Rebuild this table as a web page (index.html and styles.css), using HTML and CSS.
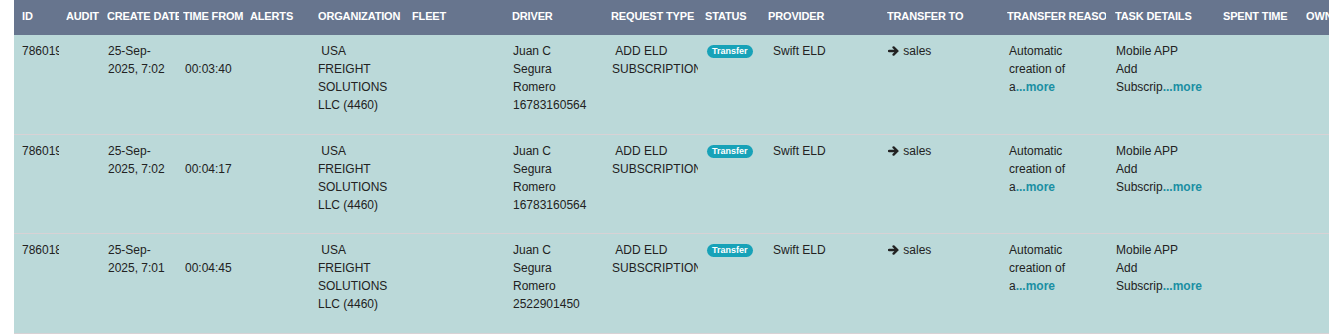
FILE: index.html
```html
<!DOCTYPE html>
<html lang="en">
<head>
<meta charset="utf-8">
<title>Tasks</title>
<link rel="stylesheet" href="styles.css">
</head>
<body>
<div class="grid-table">
  <div class="row head">
    <div class="cell">ID</div>
    <div class="cell">Audit</div>
    <div class="cell h-date">Create Date</div>
    <div class="cell">Time From</div>
    <div class="cell">Alerts</div>
    <div class="cell">Organization</div>
    <div class="cell">Fleet</div>
    <div class="cell">Driver</div>
    <div class="cell">Request Type</div>
    <div class="cell">Status</div>
    <div class="cell">Provider</div>
    <div class="cell">Transfer To</div>
    <div class="cell h-reason">Transfer Reason</div>
    <div class="cell">Task Details</div>
    <div class="cell">Spent Time</div>
    <div class="cell">Owner</div>
  </div>

  <div class="row item">
    <div class="cell c-id">7860195</div>
    <div class="cell"></div>
    <div class="cell c-date">25-Sep-2025, 7:02</div>
    <div class="cell c-time">00:03:40</div>
    <div class="cell"></div>
    <div class="cell c-org">&nbsp;USA FREIGHT SOLUTIONS LLC (4460)</div>
    <div class="cell"></div>
    <div class="cell c-driver">Juan C Segura Romero 16783160564</div>
    <div class="cell c-req">&nbsp;ADD ELD SUBSCRIPTION</div>
    <div class="cell c-status"><span class="badge">Transfer</span></div>
    <div class="cell c-provider">Swift ELD</div>
    <div class="cell c-to"><svg class="arrow" viewBox="0 0 12 10"><path d="M1 5h8.2M5.6 1.4L9.4 5 5.6 8.6"/></svg> sales</div>
    <div class="cell c-reason">Automatic creation of a<a class="more" href="#">...more</a></div>
    <div class="cell c-task">Mobile APP Add Subscrip<a class="more" href="#">...more</a></div>
    <div class="cell"></div>
    <div class="cell"></div>
  </div>

  <div class="row item">
    <div class="cell c-id">7860194</div>
    <div class="cell"></div>
    <div class="cell c-date">25-Sep-2025, 7:02</div>
    <div class="cell c-time">00:04:17</div>
    <div class="cell"></div>
    <div class="cell c-org">&nbsp;USA FREIGHT SOLUTIONS LLC (4460)</div>
    <div class="cell"></div>
    <div class="cell c-driver">Juan C Segura Romero 16783160564</div>
    <div class="cell c-req">&nbsp;ADD ELD SUBSCRIPTION</div>
    <div class="cell c-status"><span class="badge">Transfer</span></div>
    <div class="cell c-provider">Swift ELD</div>
    <div class="cell c-to"><svg class="arrow" viewBox="0 0 12 10"><path d="M1 5h8.2M5.6 1.4L9.4 5 5.6 8.6"/></svg> sales</div>
    <div class="cell c-reason">Automatic creation of a<a class="more" href="#">...more</a></div>
    <div class="cell c-task">Mobile APP Add Subscrip<a class="more" href="#">...more</a></div>
    <div class="cell"></div>
    <div class="cell"></div>
  </div>

  <div class="row item">
    <div class="cell c-id">7860188</div>
    <div class="cell"></div>
    <div class="cell c-date">25-Sep-2025, 7:01</div>
    <div class="cell c-time">00:04:45</div>
    <div class="cell"></div>
    <div class="cell c-org">&nbsp;USA FREIGHT SOLUTIONS LLC (4460)</div>
    <div class="cell"></div>
    <div class="cell c-driver">Juan C Segura Romero 2522901450</div>
    <div class="cell c-req">&nbsp;ADD ELD SUBSCRIPTION</div>
    <div class="cell c-status"><span class="badge">Transfer</span></div>
    <div class="cell c-provider">Swift ELD</div>
    <div class="cell c-to"><svg class="arrow" viewBox="0 0 12 10"><path d="M1 5h8.2M5.6 1.4L9.4 5 5.6 8.6"/></svg> sales</div>
    <div class="cell c-reason">Automatic creation of a<a class="more" href="#">...more</a></div>
    <div class="cell c-task">Mobile APP Add Subscrip<a class="more" href="#">...more</a></div>
    <div class="cell"></div>
    <div class="cell"></div>
  </div>
</div>
</body>
</html>
```

FILE: styles.css
```css
html, body {
  margin: 0;
  padding: 0;
  background: #ffffff;
  overflow: hidden;
}

body {
  font-family: "Liberation Sans", Arial, sans-serif;
  font-size: 12px;
  color: #222222;
}

.grid-table {
  margin-left: 14px;
  width: max-content;
  background: #bbd9d9;
}

.row {
  display: grid;
  grid-template-columns: 44px 41px 76px 67px 68px 94px 100px 99px 94px 63px 119px 120px 108px 108px 83px 100px;
  padding-left: 8px;
}

.cell {
  overflow: hidden;
  min-width: 0;
}

.head {
  height: 35px;
  background: #67758e;
  color: #ffffff;
  font-size: 11px;
  font-weight: bold;
  text-transform: uppercase;
  line-height: 14px;
  box-sizing: border-box;
  padding-top: 9px;
  letter-spacing: -0.15px;
}

.head .cell {
  white-space: nowrap;
}

.h-date {
  width: 72px;
}

.h-reason {
  width: 99px;
}

.item {
  height: 99.5px;
  box-sizing: border-box;
  border-bottom: 1px solid #d8d2d5;
  line-height: 18px;
  padding-top: 7px;
}

.c-id {
  width: 37px;
  white-space: nowrap;
}

.c-date {
  width: 62px;
  padding-left: 1px;
}

.c-time {
  padding-left: 2px;
  margin-top: 18px;
}

.c-org {
  width: 74px;
}

.c-driver {
  width: 76px;
  padding-left: 1px;
}

.c-req {
  width: 86px;
  padding-left: 1px;
}

.c-status {
  padding-left: 2px;
}

.badge {
  display: inline-block;
  background: #17a2b8;
  color: #ffffff;
  font-size: 9px;
  font-weight: bold;
  line-height: 1;
  padding: 2px 5px;
  border-radius: 10px;
  vertical-align: 1px;
}

.c-provider {
  padding-left: 5px;
}

.c-to {
  padding-left: 1px;
}

.arrow {
  width: 12px;
  height: 10px;
  fill: none;
  stroke: #222222;
  stroke-width: 2.4;
  stroke-linecap: round;
  stroke-linejoin: round;
  vertical-align: -1px;
}

.c-reason {
  width: 60px;
  padding-left: 2px;
}

.c-task {
  width: 84px;
  padding-left: 1px;
  overflow: visible;
}

.more {
  color: #1a8fa3;
  font-weight: bold;
  text-decoration: none;
}
```
